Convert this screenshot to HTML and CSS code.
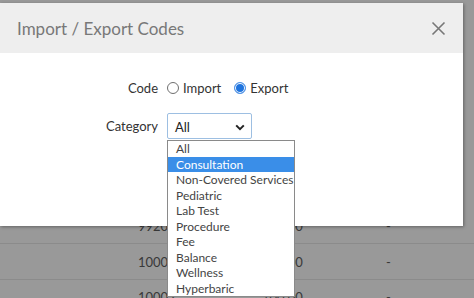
FILE: index.html
```html
<!DOCTYPE html>
<html>
<head>
<meta charset="utf-8">
<link rel="stylesheet" href="styles.css">
</head>
<body>
<div class="page">
  <div class="table">
    <div class="row"><span class="c1">99203</span><span class="c2">100.00</span><span class="c3">-</span></div>
    <div class="row"><span class="c1">10001</span><span class="c2">100.00</span><span class="c3">-</span></div>
    <div class="row"><span class="c1">10002</span><span class="c2">100.00</span><span class="c3">-</span></div>
  </div>
  <div class="modal">
    <div class="modal-header">
      <span class="title">Import / Export Codes</span>
      <svg class="close" width="15" height="15" viewBox="0 0 15 15"><path d="M1.5 1.5 L13.5 13.5 M13.5 1.5 L1.5 13.5" stroke="#777" stroke-width="1.6" fill="none"/></svg>
    </div>
    <div class="modal-body">
      <div class="form">
        <span class="label">Code</span>
        <div class="radios">
          <span class="radio"></span><span class="rtext">Import</span>
          <span class="radio checked"></span><span class="rtext">Export</span>
        </div>
        <span class="label">Category</span>
        <div class="select-wrap">
          <div class="select">
            <span>All</span>
            <svg class="chev" width="10" height="7" viewBox="0 0 10 7"><path d="M1.2 1.4 L5 5.2 L8.8 1.4" stroke="#222" stroke-width="2" fill="none"/></svg>
          </div>
          <div class="dropdown">
            <div class="opt">All</div>
            <div class="opt sel">Consultation</div>
            <div class="opt">Non-Covered Services</div>
            <div class="opt">Pediatric</div>
            <div class="opt">Lab Test</div>
            <div class="opt">Procedure</div>
            <div class="opt">Fee</div>
            <div class="opt">Balance</div>
            <div class="opt">Wellness</div>
            <div class="opt">Hyperbaric</div>
          </div>
        </div>
      </div>
    </div>
  </div>
</div>
</body>
</html>
```
FILE: styles.css
```css
html, body {
  margin: 0;
  padding: 0;
}
body {
  width: 474px;
  height: 298px;
  overflow: hidden;
  font-family: Lato, "Liberation Sans", sans-serif;
  background: #999999;
}
.page {
  position: relative;
  width: 474px;
  height: 298px;
  overflow: hidden;
  background: #999999;
}
.table {
  padding-top: 208px;
}
.row {
  height: 35px;
  border-bottom: 1px solid #8b8b8b;
  display: flex;
  align-items: center;
  font-size: 13px;
  color: #383838;
}
.row:last-child {
  align-items: flex-start;
  padding-top: 9px;
  box-sizing: border-box;
}
.c1 {
  margin-left: 138px;
  width: 124px;
}
.c2 {
  width: 124px;
}
.c3 {
  width: 40px;
}
.modal {
  position: absolute;
  left: 0;
  top: 3px;
  width: 463px;
  height: 223px;
  background: #ffffff;
  box-shadow: 1px 1px 3px rgba(0,0,0,0.35);
}
.modal-header {
  height: 50px;
  background: #eeeeee;
  display: flex;
  align-items: center;
  justify-content: space-between;
  padding: 0 17px 0 17px;
}
.title {
  font-size: 17px;
  color: #787878;
}
.close {
  display: block;
  margin-top: 1px;
}
.modal-body {
  padding-top: 25px;
}
.form {
  display: grid;
  grid-template-columns: 158px auto;
  column-gap: 9px;
  row-gap: 15px;
  align-items: center;
  font-size: 13px;
  color: #333;
}
.label {
  text-align: right;
}
.radios {
  display: flex;
  align-items: center;
  height: 20px;
}
.radio {
  width: 10px;
  height: 10px;
  border: 1px solid #6f6f6f;
  border-radius: 50%;
  box-sizing: content-box;
  margin-right: 4px;
}
.radio.checked {
  border-color: #5596e6;
  background: #1f74de;
  box-shadow: inset 0 0 0 1px #fff;
}
.rtext {
  margin-right: 13px;
}
.select-wrap {
  position: relative;
  width: 85px;
}
.select {
  box-sizing: border-box;
  height: 26px;
  border: 1px solid #9dbfe2;
  border-radius: 2px;
  display: flex;
  align-items: center;
  justify-content: space-between;
  padding: 2px 6px 0 7px;
  color: #222;
}
.chev {
  display: block;
}
.dropdown {
  position: absolute;
  left: 0;
  top: 27px;
  width: 128px;
  box-sizing: border-box;
  border: 1px solid #8a8a8a;
  background: #fff;
}
.opt {
  height: 15.5px;
  line-height: 15.5px;
  padding-left: 8px;
  font-size: 12px;
  color: #444;
  white-space: nowrap;
}
.opt.sel {
  background: #3a8ee8;
  color: #fff;
}
```
